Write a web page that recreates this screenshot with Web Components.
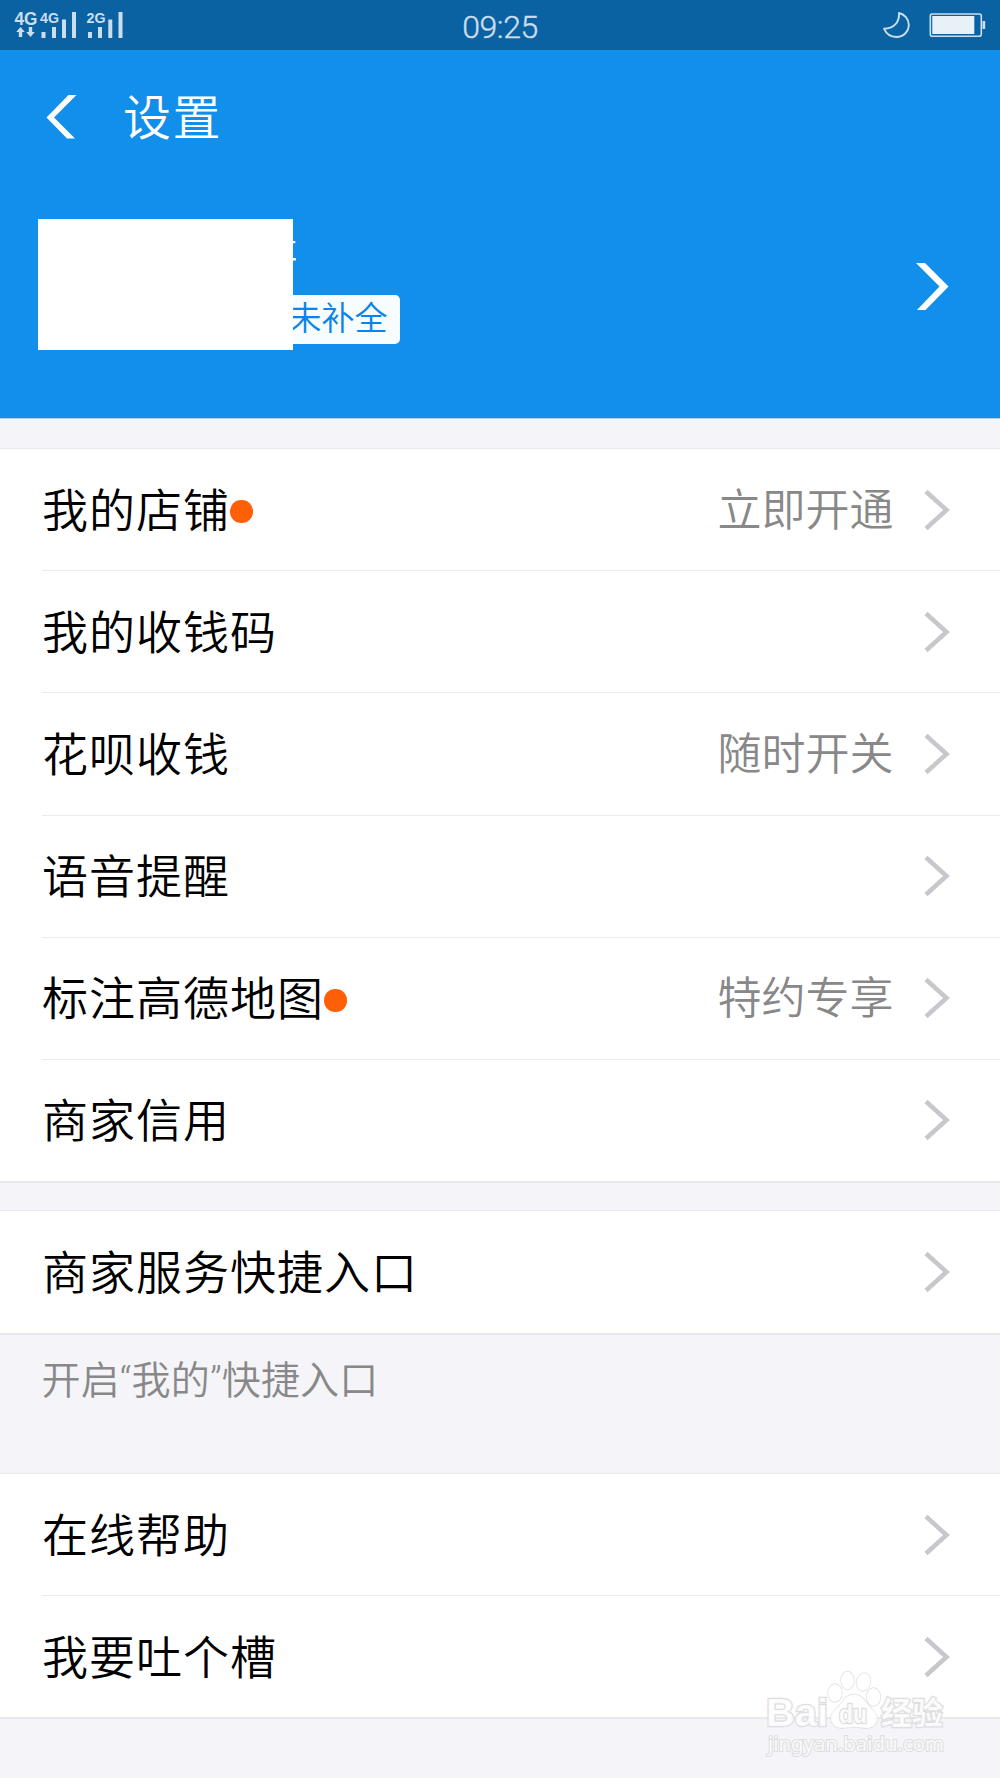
<!DOCTYPE html>
<html lang="zh-CN">
<head>
<meta charset="utf-8">
<title>设置</title>
<style>
  body {
    margin: 0;
    background: #f4f4f9;
    font-family: "Noto Sans CJK SC", sans-serif;
    font-weight: 350;
  }
</style>
</head>
<body>
<settings-page>
  <status-bar slot="top" time="09:25"></status-bar>
  <profile-header slot="top" heading="设置" badge="未补全"></profile-header>

  <settings-group style="height: 735px">
    <settings-row value="立即开通" dot>我的店铺</settings-row>
    <settings-row>我的收钱码</settings-row>
    <settings-row value="随时开关">花呗收钱</settings-row>
    <settings-row>语音提醒</settings-row>
    <settings-row value="特约专享" dot>标注高德地图</settings-row>
    <settings-row>商家信用</settings-row>
  </settings-group>

  <settings-group style="height: 125px; margin-top: 27px">
    <settings-row>商家服务快捷入口</settings-row>
  </settings-group>
  <group-hint>开启“我的”快捷入口</group-hint>

  <settings-group style="height: 246px">
    <settings-row>在线帮助</settings-row>
    <settings-row>我要吐个槽</settings-row>
  </settings-group>

  <site-watermark slot="overlay"></site-watermark>
</settings-page>

<script>
const define = (name, html, setup) => {
  const template = document.createElement('template');
  template.innerHTML = html;

  customElements.define(name, class extends HTMLElement {
    constructor() {
      super();
      this.attachShadow({ mode: 'open' }).appendChild(template.content.cloneNode(true));
    }

    connectedCallback() {
      if (setup) setup(this, this.shadowRoot);
    }
  });
};

define('settings-page', `
  <style>
    :host {
      position: relative;
      display: flex;
      flex-direction: column;
      height: 1778px;
      overflow: hidden;
    }

    main {
      display: flex;
      flex-direction: column;
      padding-top: 29px;
    }
  </style>
  <slot name="top"></slot>
  <main><slot></slot></main>
  <slot name="overlay"></slot>
`);

define('status-bar', `
  <style>
    :host {
      display: grid;
      grid-template-columns: 1fr auto 1fr;
      align-items: center;
      height: 50px;
      background: #0b62a2;
      color: #cbdeed;
    }

    svg {
      display: block;
    }

    .time {
      font: 350 32px/50px Roboto, sans-serif;
      letter-spacing: -.4px;
      padding-top: 2px;
      box-sizing: border-box;
      height: 50px;
      -webkit-text-stroke: .4px currentColor;
    }

    .right {
      justify-self: end;
    }
  </style>
  <svg width="140" height="50" fill="currentColor" font-family="Liberation Sans" font-weight="700">
    <text x="14.5" y="25" font-size="18" textLength="23" lengthAdjust="spacingAndGlyphs">4G</text>
    <text x="40" y="22.5" font-size="15" textLength="19" lengthAdjust="spacingAndGlyphs">4G</text>
    <text x="86.5" y="22.5" font-size="15" textLength="19" lengthAdjust="spacingAndGlyphs">2G</text>
    <path d="M20.5 27l4.3 5h-2.6v5h-3.4v-5h-2.6zM30.5 37l-4.3-5h2.6v-5h3.4v5h2.6z"/>
    <path d="M41.5 32h4v6h-4zM52 27h4v11h-4zM62 19.500h4v18.500h-4zM72 12h4v26h-4z"/>
    <path d="M88 32h4v6h-4zM98 27h4v11h-4zM108.300 19.500h4v18.500h-4zM118.500 12h4v26h-4z"/>
  </svg>
  <div class="time"></div>
  <svg class="right" width="140" height="50">
    <path d="M39 13c.6 9.500-5.500 15.700-15 15.700 2.200 5 7 8.300 12.300 8.300 7 0 12.500-5.300 12.500-12.300 0-5.600-4.500-10.500-9.800-11.700z" fill="none" stroke="#cbdeed" stroke-width="1.9" stroke-linejoin="round"/>
    <rect x="70.300" y="14" width="51" height="22.300" rx="2" fill="none" stroke="#cbdeed" stroke-width="1.6"/>
    <rect x="72.300" y="16" width="42" height="18" fill="#e8f0f8"/>
    <path d="M122.500 21h2.700v8h-2.700z" fill="#cbdeed"/>
  </svg>
`, (host, root) => {
  root.querySelector('.time').textContent = host.getAttribute('time');
});

define('profile-header', `
  <style>
    :host {
      display: flex;
      flex-direction: column;
      height: 369px;
      box-sizing: border-box;
      border-bottom: 1px solid #b4d1e9;
      background: #128eeb;
      color: #fff;
    }

    svg {
      display: block;
      fill: currentColor;
    }

    .bar {
      display: flex;
      align-items: center;
      height: 134px;
      padding-left: 46px;
      gap: 46px;
    }

    h1 {
      margin: -6px 0 0;
      font-size: 48px;
      font-weight: inherit;
      line-height: 60px;
      letter-spacing: 1.500px;
    }

    .profile {
      display: flex;
      justify-content: space-between;
      padding: 35px 51px 0 38px;
    }

    .user {
      position: relative;
      width: 362px;
      height: 131px;
    }

    .badge {
      box-sizing: border-box;
      width: 161.500px;
      height: 48.500px;
      margin: 76px 0 0 200px;
      padding-right: 12px;
      border-radius: 5px;
      background: #f7fcff;
      color: #0a84ea;
      font-size: 33px;
      line-height: 43px;
      text-align: right;
    }

    /* block that hides the account name */
    .cover {
      position: absolute;
      inset: 0 auto 0 0;
      width: 255.400px;
      background: #fff;
    }

    .tail {
      position: absolute;
      left: 255px;
      top: 22px;
    }

    .go {
      margin-top: 44px;
    }
  </style>
  <div class="bar">
    <svg width="31" height="44"><path d="M22.500 0h8L8 22.500 29 43.500h-8L.5 22.500z"/></svg>
    <h1></h1>
  </div>
  <div class="profile">
    <div class="user">
      <div class="badge"></div>
      <div class="cover"></div>
      <svg class="tail" width="4" height="22"><path d="M0 0h2.300v2.300H0zM0 17h3v2.400H0z"/></svg>
    </div>
    <svg class="go" width="33" height="47"><path d="M0 0h9l23.500 23.500L9.500 47H1l22.500-23.500z"/></svg>
  </div>
`, (host, root) => {
  root.querySelector('h1').textContent = host.getAttribute('heading');
  root.querySelector('.badge').textContent = host.getAttribute('badge');
});

define('settings-group', `
  <style>
    :host {
      display: flex;
      flex-direction: column;
      box-sizing: border-box;
      border-top: 1px solid #e9e9ec;
      border-bottom: 2px solid #e9e9eb;
      background: #fff;
    }
  </style>
  <slot></slot>
`);

define('settings-row', `
  <style>
    :host {
      display: flex;
      flex: 1;
      align-items: center;
      box-sizing: border-box;
      margin-left: 41.500px;
      padding-right: 50px;
      color: #000;
      font-size: 46px;
      line-height: 60px;
    }

    :host(:not(:last-child)) {
      border-bottom: 1px solid #ebebed;
    }

    .label,
    .value {
      margin-top: -6px;
    }

    .label {
      padding-left: .5px;
      letter-spacing: 1px;
    }

    .dot {
      display: none;
      width: 22.500px;
      height: 22.500px;
      margin-top: 4px;
      border-radius: 50%;
      background: #ff5f07;
    }

    :host([dot]) .dot {
      display: block;
    }

    .value {
      margin-left: auto;
      color: #888;
      font-size: 44px;
    }

    svg {
      margin-left: 30.500px;
      fill: none;
      stroke: #c7c7cc;
      stroke-width: 4.5;
    }
  </style>
  <span class="label"><slot></slot></span>
  <i class="dot"></i>
  <span class="value"></span>
  <svg width="26" height="42"><path d="M2 2.500l20.500 18.500L2 39.500"/></svg>
`, (host, root) => {
  root.querySelector('.value').textContent = host.getAttribute('value') ?? '';
});

define('group-hint', `
  <style>
    :host {
      display: block;
      box-sizing: border-box;
      height: 138px;
      padding: 21px 41.500px 0;
      color: #888;
      font-family: Roboto, "Noto Sans CJK SC", sans-serif;
      font-size: 39px;
      line-height: 50px;
      letter-spacing: .15px;
    }
  </style>
  <slot></slot>
`);

define('site-watermark', `
  <style>
    :host {
      position: absolute;
      left: 760px;
      top: 1664px;
    }

    svg {
      display: block;
      fill: #fff;
      fill-opacity: .85;
      stroke: #dedee0;
      stroke-width: 1.3;
      paint-order: stroke;
    }
  </style>
  <svg width="200" height="100" font-family="Liberation Sans">
    <g font-weight="700" stroke-width="2.5">
      <text x="6" y="61.500" font-size="38" textLength="62" lengthAdjust="spacingAndGlyphs">Bai</text>
      <text x="121" y="59.500" font-size="31" font-family="Noto Sans CJK SC" textLength="62">经验</text>
    </g>
    <ellipse cx="75" cy="29" rx="7" ry="9"/>
    <ellipse cx="87.500" cy="16.500" rx="6.500" ry="9"/>
    <ellipse cx="103.500" cy="18" rx="7" ry="9" transform="rotate(12 103.500 18)"/>
    <ellipse cx="113.500" cy="33" rx="7" ry="9"/>
    <path d="M94 30.500c7 0 10 4.500 13 9 3 4.500 10 8 10 15 0 6-4 9.500-10 9.500-5 0-8-1-13-1s-8 1-12 1c-7 0-11-4-11-10 0-7 7-10 10-14.500 3-4.500 6-9 13-9z"/>
    <text x="79" y="59" font-size="25" font-weight="700" textLength="28" lengthAdjust="spacingAndGlyphs" stroke-width="2.5">du</text>
    <text x="8" y="87" font-size="19" font-family="Noto Sans" font-weight="400" textLength="176" lengthAdjust="spacingAndGlyphs" stroke-width="2">jingyan.baidu.com</text>
  </svg>
`);
</script>
</body>
</html>
